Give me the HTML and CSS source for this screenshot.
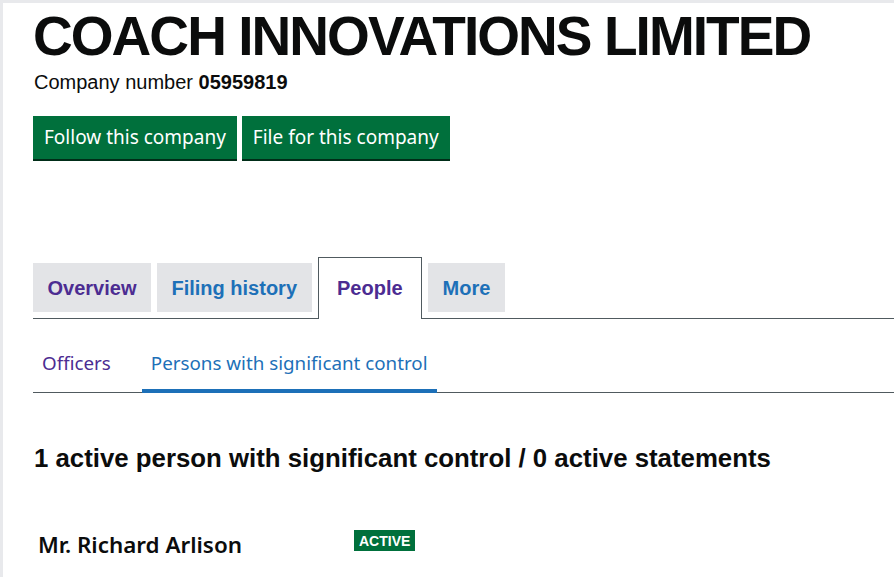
FILE: index.html
```html
<!DOCTYPE html>
<html lang="en">
<head>
<meta charset="utf-8">
<title>COACH INNOVATIONS LIMITED</title>
<link rel="stylesheet" href="styles.css">
</head>
<body>
<div class="frame">
  <main class="page">
    <h1 class="title">COACH INNOVATIONS LIMITED</h1>
    <p class="company-number">Company number <strong>05959819</strong></p>
    <div class="actions">
      <a class="btn" href="#">Follow this company</a>
      <a class="btn" href="#">File for this company</a>
    </div>
    <nav class="tabs">
      <a class="tab tab-visited" href="#">Overview</a>
      <a class="tab" href="#">Filing history</a>
      <a class="tab tab-selected" href="#">People</a>
      <a class="tab" href="#">More</a>
    </nav>
    <nav class="subnav">
      <a class="sublink sublink-visited" href="#">Officers</a>
      <a class="sublink sublink-active" href="#">Persons with significant control</a>
    </nav>
    <h2 class="summary">1 active person with significant control / 0 active statements</h2>
    <div class="person">
      <span class="person-name">Mr. Richard Arlison</span>
      <span class="tag">ACTIVE</span>
    </div>
  </main>
</div>
</body>
</html>
```
FILE: styles.css
```css
html, body {
  margin: 0;
  padding: 0;
  background: #ffffff;
}
.frame {
  border-top: 3px solid #e8e9ec;
  border-left: 3px solid #e8e9ec;
  min-height: 577px;
  box-sizing: border-box;
}
.page {
  padding: 0 0 0 30px;
  font-family: "Liberation Sans", Arial, sans-serif;
  color: #0b0c0c;
}
.title {
  margin: 0;
  padding-top: 6px;
  font-size: 55px;
  line-height: 54px;
  font-weight: 700;
  letter-spacing: -1.95px;
}
.company-number {
  margin: 7px 0 0 1px;
  font-size: 20px;
  line-height: 24px;
}
.company-number strong {
  font-weight: 700;
}
.actions {
  display: flex;
  gap: 5px;
  margin-top: 22px;
}
.btn {
  display: block;
  background: #00703c;
  color: #ffffff;
  text-decoration: none;
  font-family: "Noto Sans", sans-serif;
  font-size: 19px;
  line-height: 24px;
  padding: 9px 11px 10px 11px;
  box-shadow: 0 2px 0 #002d18;
}
.tabs {
  display: flex;
  align-items: flex-end;
  gap: 6px;
  margin-top: 98px;
  border-bottom: 1px solid #505a5f;
}
.tab {
  display: block;
  background: #e3e4e7;
  color: #1d70b8;
  font-weight: 700;
  font-size: 20px;
  line-height: 24px;
  text-decoration: none;
  padding: 13px 14.5px 12px 14.5px;
  margin-bottom: 6px;
}
.tab-visited {
  color: #4c2c92;
}
.tab-selected {
  background: #ffffff;
  color: #4c2c92;
  border: 1px solid #505a5f;
  border-bottom: 0;
  padding: 18px 18.5px 19px 18.5px;
  margin-bottom: -1px;
}
.subnav {
  display: flex;
  border-bottom: 1px solid #505a5f;
}
.sublink {
  display: block;
  font-family: "Noto Sans", sans-serif;
  font-size: 18.8px;
  line-height: 24px;
  text-decoration: none;
  color: #1d70b8;
  padding: 32px 9px 14px 9px;
  border-bottom: 4px solid transparent;
  margin-bottom: -1px;
}
.sublink-visited {
  color: #4c2c92;
  margin-right: 22px;
}
.sublink-active {
  border-bottom-color: #1d70b8;
}
.summary {
  margin: 50px 0 0 1px;
  font-size: 25.8px;
  line-height: 30px;
  font-weight: 700;
}
.person {
  display: flex;
  align-items: center;
  margin-top: 59px;
  padding-left: 5px;
}
.person-name {
  font-family: "Noto Sans", sans-serif;
  font-weight: 600;
  font-size: 22.4px;
  line-height: 26px;
  width: 316px;
}
.tag {
  display: inline-block;
  background: #00703c;
  color: #ffffff;
  font-weight: 700;
  font-size: 14px;
  line-height: 16px;
  padding: 3px 5px 2px 5px;
  margin-top: -10px;
}
```
